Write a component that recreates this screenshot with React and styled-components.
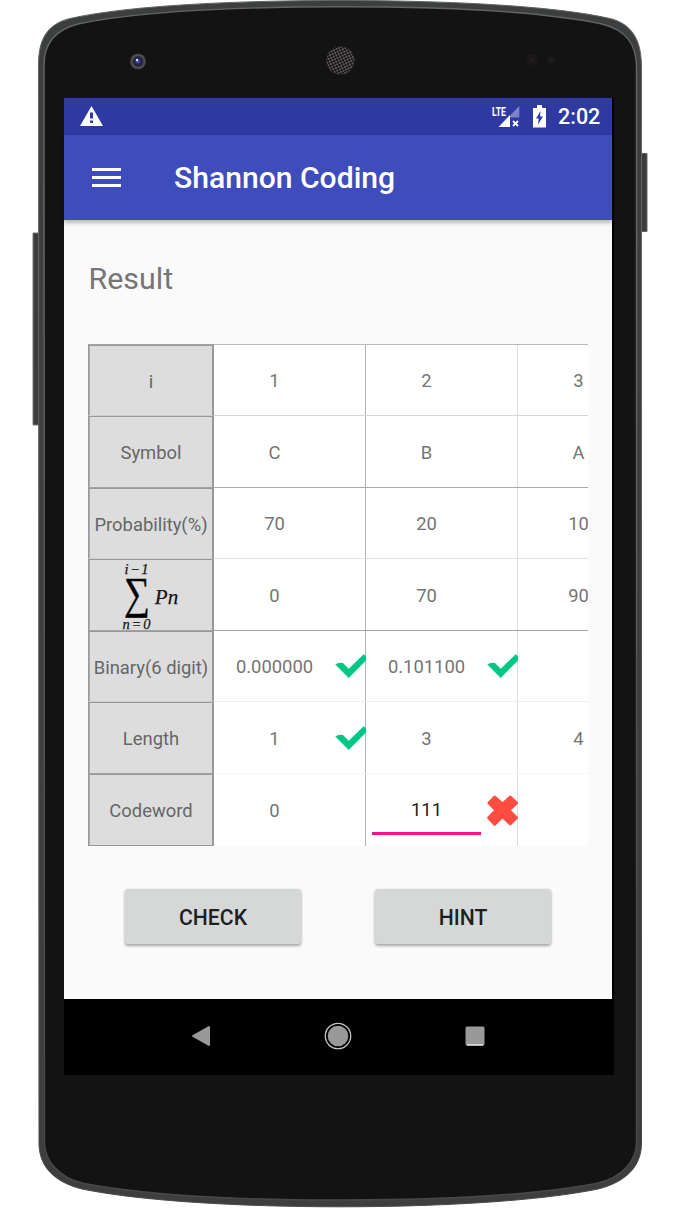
import React from "react";
import styled, { createGlobalStyle } from "styled-components";

const GlobalStyle = createGlobalStyle`
  * { box-sizing: border-box; }
  body { margin: 0; background: #fff; overflow: hidden; font-family: Roboto, "Liberation Sans", sans-serif; }
  svg { display: block; }
`;

const Device = styled.div`
  position: relative;
  width: 676px;
  height: 1218px;
  padding: 98px 62px 0 64px;
`;

const DeviceArt = styled.svg`
  position: absolute;
  top: 0;
  left: 0;
`;

const Display = styled.div`
  position: relative;
  width: 550px;
  height: 977px;
  background: #000;
`;

const Screen = styled.div`
  display: flex;
  flex-direction: column;
  width: 548px;
  height: 901px;
  background: #fafafa;
`;

const StatusBar = styled.div`
  display: flex;
  align-items: center;
  flex: 0 0 37px;
  height: 37px;
  padding: 0 12px 0 16px;
  background: #2e39a2;
  color: #fff;
`;

const StatusIcons = styled.div`
  display: flex;
  align-items: center;
  margin-left: auto;
`;

const BatteryIcon = styled.svg`
  margin-left: 13px;
`;

const Clock = styled.span`
  width: 42px;
  margin-left: 12px;
  font-size: 21.5px;
  font-weight: 500;
  line-height: 37px;
  white-space: nowrap;
`;

const AppBar = styled.header`
  position: relative;
  display: flex;
  align-items: center;
  gap: 53px;
  flex: 0 0 85px;
  padding: 0 28px 1px;
  background: #3e4dbb;
  color: #fff;
  box-shadow: 0 3px 4px rgba(0, 0, 0, 0.26);
`;

const Title = styled.h1`
  margin: 2px 0 0;
  font-size: 30.1px;
  font-weight: 500;
  line-height: 40px;
`;

const Content = styled.main`
  display: flex;
  flex-direction: column;
  padding: 39px 24px 0;
`;

const Heading = styled.h2`
  margin: 0 0 45px;
  padding-left: 0.5px;
  font-size: 30.4px;
  font-weight: 400;
  line-height: 40px;
  color: #757575;
`;

const Table = styled.div`
  width: 500px;
  overflow: hidden;
  background: #fff;
`;

const Row = styled.div`
  display: grid;
  grid-template-columns: 126px 152px 152px 152px;
  grid-template-rows: 100%;
  height: ${(p) => p.$height}px;
  color: #757575;
  font-size: 18.4px;
`;

const LabelCell = styled.div`
  display: flex;
  align-items: center;
  justify-content: center;
  border: solid #999;
  border-width: 1px 2px 0 1px;
  border-top-color: ${(p) => (p.$strong ? "#a2a2a2" : "#cdcfcd")};
  border-bottom-width: ${(p) => (p.$last ? 1 : 0)}px;
  background: #ddd;
  box-shadow: inset 0 1px #999, inset 1px 0 #aaa;
  color: #666;
  padding: 2px 0 0 1px;
  white-space: nowrap;
`;

const Cell = styled.div`
  display: flex;
  align-items: center;
  border-top: 1px solid ${(p) => p.$line};
  box-shadow: inset -1px 0 ${(p) => p.$edge};
`;

const Value = styled.span`
  flex: 0 0 121px;
  padding-top: 1px;
  text-align: center;
`;

const Entry = styled.span`
  flex: 0 0 109px;
  align-self: stretch;
  margin: 0 6px 11px;
  border-bottom: 3px solid #fc1482;
  color: #212121;
  line-height: 72px;
  text-align: center;
`;

const Actions = styled.div`
  display: flex;
  gap: 74px;
  padding: 43px 0 0 37px;
`;

const Button = styled.button`
  width: 176px;
  height: 55px;
  padding: 1px 0 0;
  border: 0;
  border-radius: 3px;
  background: #d6d8d7;
  box-shadow: 0 2px 3px rgba(0, 0, 0, 0.32), 0 0 2px rgba(0, 0, 0, 0.12);
  color: #1e1f1e;
  font: 500 21.2px Roboto, sans-serif;
`;

const NavBar = styled.nav`
  display: flex;
  align-items: center;
  justify-content: space-between;
  width: 294px;
  height: 73px;
  margin-left: 127px;
`;

const ROW_HEIGHTS = [71, 72, 71, 72, 71, 72, 73];
const LINES = ["#b9b9b9", "#d6d6d6", "#a9a9a9", "#e2e2e2", "#a3a3a3", "#eeeeee", "#f5f5f5"];
const EDGES = ["#b2b2b2", "#dddddd", "transparent"];

const ROWS = [
  { label: "i", values: ["1", "2", "3"] },
  { label: "Symbol", values: ["C", "B", "A"] },
  { label: "Probability(%)", values: ["70", "20", "10"] },
  { label: "sum", values: ["0", "70", "90"] },
  { label: "Binary(6 digit)", values: ["0.000000", "0.101100", ""], marks: ["ok", "ok"] },
  { label: "Length", values: ["1", "3", "4"], marks: ["ok"] },
  { label: "Codeword", values: ["0", "111", ""], marks: [null, "bad"], editing: 1 },
];

function SumFormula() {
  return (
    <svg width="122" height="69" fill="#151515" stroke="#151515" strokeWidth=".25" fontFamily="'Liberation Serif', serif" fontStyle="italic" textAnchor="middle">
      <text x="46.500" y="12.500" fontSize="14.500" textLength="24">i−1</text>
      <text transform="translate(47 47) scale(.93 1.140)" fontSize="39" fontStyle="normal" fill="#000" strokeWidth=".4">∑</text>
      <text x="76.500" y="43" fontSize="21" textLength="23.500">Pn</text>
      <text x="46.500" y="68" fontSize="14.500" textLength="28">n=0</text>
    </svg>
  );
}

function Mark({ kind }) {
  if (kind === "ok") {
    return (
      <svg width="31" height="24" fill="#00c785">
        <path d="M.3 10.500Q4 7.800 8 9L13.700 14.800 28.700.3 31 2.500V6.500L13.700 24Z" />
      </svg>
    );
  }
  if (kind === "bad") {
    return (
      <svg width="31" height="31" fill="#ff4c41" stroke="#ff4c41" strokeWidth="3" strokeLinejoin="round">
        <path d="M7.700 2 15.500 9 23.300 2 29.500 8 22 15.300 29.500 22.700 23.300 28.800 15.500 21.500 7.700 29.300 1.700 22.700 9 15.300 2 8Z" />
      </svg>
    );
  }
  return null;
}

function ResultTable() {
  return (
    <Table>
      {ROWS.map((row, r) => (
        <Row key={row.label} $height={ROW_HEIGHTS[r]}>
          <LabelCell $strong={r % 2 === 0} $last={r === ROWS.length - 1}>
            {row.label === "sum" ? <SumFormula /> : row.label}
          </LabelCell>
          {row.values.map((value, c) => (
            <Cell key={c} $line={LINES[r]} $edge={EDGES[c]}>
              {row.editing === c ? <Entry>{value}</Entry> : <Value>{value}</Value>}
              <Mark kind={row.marks?.[c]} />
            </Cell>
          ))}
        </Row>
      ))}
    </Table>
  );
}

function PhoneBody() {
  return (
    <DeviceArt width="676" height="1218">
      <defs>
        <linearGradient id="rim" x1="0" x2="0" y1="0" y2="1">
          <stop offset="0" stopColor="#626464" />
          <stop offset=".2" stopColor="#66676a" />
          <stop offset=".75" stopColor="#4b4c4d" />
          <stop offset="1" stopColor="#484848" />
        </linearGradient>
        <pattern id="mesh" width="4" height="4" patternUnits="userSpaceOnUse" patternTransform="rotate(20)">
          <rect width="4" height="4" fill="#5c5857" />
          <circle cx="1" cy="1" r="1.100" fill="#060606" />
          <circle cx="3" cy="3" r="1.100" fill="#060606" />
        </pattern>
        <radialGradient id="lens">
          <stop offset="0" stopColor="#5c60c8" />
          <stop offset=".35" stopColor="#24246e" />
          <stop offset=".55" stopColor="#23232b" />
          <stop offset=".8" stopColor="#56565a" />
          <stop offset="1" stopColor="#333" />
        </radialGradient>
      </defs>
      <path d="M39 233h-6v192h6z" fill="#3c3c3c" stroke="#777" />
      <path d="M641 153.500h6v78h-6z" fill="#3c3c3c" stroke="#666" />
      <path
        d="M38.500 65C38.500 38 48 24 70 18.500C130 5 240 .5 340 .5S550 5 610 18.500C632 24 641.500 40 641.500 67V1143C641.500 1163 630 1181 598 1189C540 1201 440 1206.800 340 1206.800S140 1201 82 1189C50 1181 39 1163 39 1143Z"
        fill="#3d3e3f"
        stroke="url(#rim)"
      />
      <path
        d="M44 65C44 44 54 30 78 24C140 11 240 6.800 340 6.800S540 11 602 24C626 30 636.500 44 636.500 67V1143C636 1160 623 1178 596 1183.500C535 1195 440 1200 340 1200S145 1195 84 1183.500C58 1178 45 1160 44.500 1143Z"
        fill="#131313"
        stroke="url(#rim)"
        strokeWidth="1.400"
      />
      <circle cx="138" cy="61.500" r="8" fill="url(#lens)" />
      <circle cx="137" cy="60" r="1.200" fill="#dce4ff" />
      <circle cx="340.500" cy="60.500" r="14" fill="url(#mesh)" />
      <circle cx="532" cy="59.500" r="6" fill="#1a1818" />
      <circle cx="551" cy="59.500" r="4" fill="#1a1818" />
      <circle cx="532.500" cy="60.500" r="1.300" fill="#35221e" />
      <circle cx="551.500" cy="60" r="1.200" fill="#2c201e" />
    </DeviceArt>
  );
}

export default function App() {
  return (
    <Device>
      <GlobalStyle />
      <PhoneBody />
      <Display>
        <Screen>
          <StatusBar>
            <svg width="23" height="22" viewBox="0 0 23 22">
              <path d="M11.500 0 23 20H0Z" fill="#fff" />
              <path d="M10 6.500h3v6h-3zm0 8h3v2.600h-3z" fill="#2e39a2" />
            </svg>
            <StatusIcons>
              <svg width="28" height="24" viewBox="0 0 28 24">
                <path d="M27.300 1V12.500H18V10.500Z" fill="#7c83c6" />
                <path d="M18 10V22H6.500Z" fill="#fff" />
                <path d="m21 16 5 5m0-5-5 5" stroke="#fff" strokeWidth="1.800" />
                <text x="0" y="10.500" fill="#fff" fontSize="13" fontWeight="700" fontFamily="Roboto" textLength="14" lengthAdjust="spacingAndGlyphs">LTE</text>
              </svg>
              <BatteryIcon width="13" height="24" viewBox="0 0 13 24">
                <path d="M0 3h4V0h5v3h4v19.500H0Z" fill="#fff" />
                <path d="M7.500 6 3 13.500h2.700L5 19.500l5-8H7Z" fill="#2e39a2" />
              </BatteryIcon>
              <Clock>2:02</Clock>
            </StatusIcons>
          </StatusBar>
          <AppBar>
            <svg width="29" height="19" fill="#fff">
              <path d="M0 0h29v3H0zM0 8h29v3H0zM0 16h29v3H0z" />
            </svg>
            <Title>Shannon Coding</Title>
          </AppBar>
          <Content>
            <Heading>Result</Heading>
            <ResultTable />
            <Actions>
              <Button>CHECK</Button>
              <Button>HINT</Button>
            </Actions>
          </Content>
        </Screen>
        <NavBar>
          <svg width="20" height="22">
            <path d="M18 2V20L2 11Z" fill="#999" stroke="#999" strokeWidth="2" strokeLinejoin="round" />
          </svg>
          <svg width="28" height="28">
            <circle cx="14" cy="14" r="12.700" fill="none" stroke="#c4c4c4" strokeWidth="1.300" />
            <circle cx="14" cy="14" r="10.300" fill="#999" />
          </svg>
          <svg width="20" height="20">
            <rect x=".5" y=".5" width="19" height="19" rx="1.500" fill="#999" />
            <path d="M2 19h16" stroke="#fff" strokeWidth="1.200" />
          </svg>
        </NavBar>
      </Display>
    </Device>
  );
}
